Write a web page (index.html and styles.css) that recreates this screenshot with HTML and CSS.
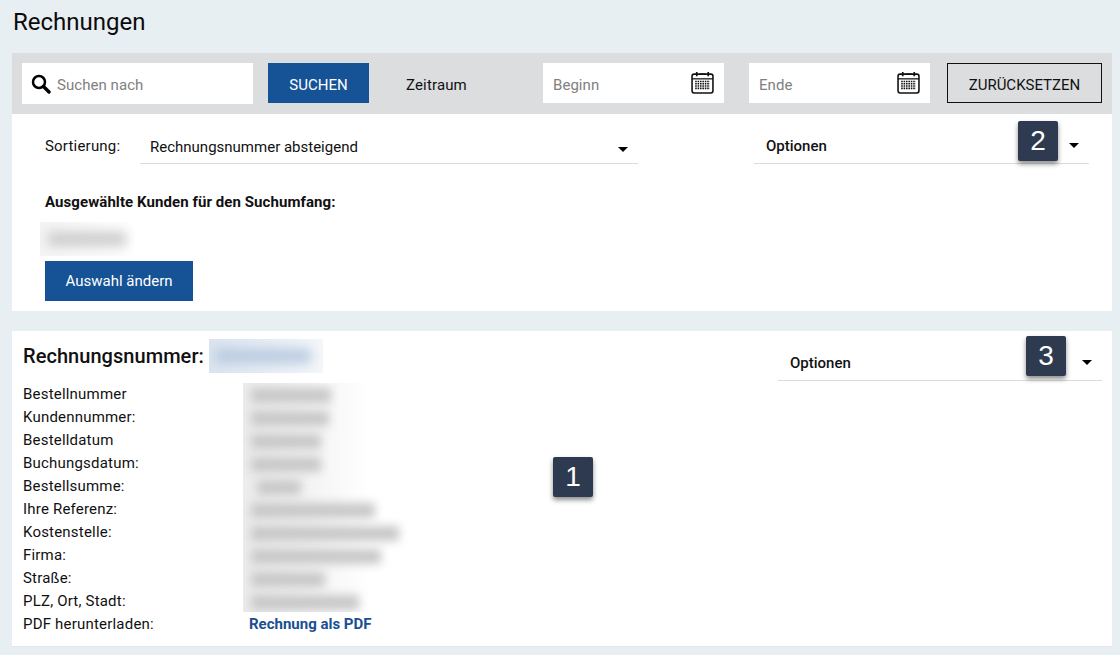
FILE: index.html
```html
<!DOCTYPE html>
<html lang="de">
<head>
<meta charset="utf-8">
<title>Rechnungen</title>
<link rel="stylesheet" href="styles.css">
</head>
<body>
<svg class="defs" width="0" height="0" aria-hidden="true">
  <symbol id="cal" viewBox="0 0 22 22">
    <rect x="1" y="3" width="20" height="18" rx="2" fill="#fff" stroke="#111" stroke-width="1.5"/>
    <path d="M1 7.5h20" stroke="#111" stroke-width="1.2"/>
    <path d="M5.5 1v4M16.5 1v4" stroke="#111" stroke-width="1.6"/>
    <path d="M8 3h6" stroke="#111" stroke-width="1.4"/>
    <path d="M4 10h14M4 12.200h14M4 14.400h14M4 16.600h14" stroke="#111" stroke-width="1.500" stroke-dasharray="1.500 .8"/>
  </symbol>
</svg>
<h1 class="title">Rechnungen</h1>
<section class="panel">
  <div class="toolbar">
    <div class="field search">
      <svg class="search-icon" width="20" height="20" viewBox="0 0 20 20"><circle cx="8" cy="8" r="6" fill="none" stroke="#000" stroke-width="2.500"/><path d="M12.500 12.500L18 18" stroke="#000" stroke-width="3.400" stroke-linecap="round"/></svg>
      <span class="ph">Suchen nach</span>
    </div>
    <button class="btn btn-search">SUCHEN</button>
    <span class="range">Zeitraum</span>
    <div class="field date"><span class="ph">Beginn</span><svg class="cal" width="23" height="23"><use href="#cal"/></svg></div>
    <div class="field date date-end"><span class="ph">Ende</span><svg class="cal" width="23" height="23"><use href="#cal"/></svg></div>
    <button class="btn btn-reset">ZURÜCKSETZEN</button>
  </div>
  <div class="filters">
    <div class="sort-row">
      <span class="sort-label">Sortierung:</span>
      <div class="select select-sort"><span>Rechnungsnummer absteigend</span><i class="caret"></i></div>
      <div class="select select-opt"><b>Optionen</b><i class="caret caret-up"></i><span class="badge badge-2">2</span></div>
    </div>
    <p class="scope-label">Ausgewählte Kunden für den Suchumfang:</p>
    <div class="blur-box blur-customer"><i class="bar w70"></i></div>
    <button class="btn btn-change">Auswahl ändern</button>
  </div>
</section>
<section class="card">
  <div class="card-main">
    <h2 class="card-title">Rechnungsnummer: <span class="blur-box blur-number"><i class="bar bar-blue"></i></span></h2>
    <div class="details">
      <ul class="labels">
        <li>Bestellnummer</li>
        <li>Kundennummer:</li>
        <li>Bestelldatum</li>
        <li>Buchungsdatum:</li>
        <li>Bestellsumme:</li>
        <li>Ihre Referenz:</li>
        <li>Kostenstelle:</li>
        <li>Firma:</li>
        <li>Straße:</li>
        <li>PLZ, Ort, Stadt:</li>
        <li>PDF herunterladen:</li>
      </ul>
      <div class="values">
        <div class="blur-box blur-values">
          <i class="line l1"></i>
          <i class="line l2"></i>
          <i class="line l3"></i>
          <i class="line l4"></i>
          <i class="line l5"></i>
          <i class="line l6"></i>
          <i class="line l7"></i>
          <i class="line l8"></i>
          <i class="line l9"></i>
          <i class="line l10"></i>
        </div>
        <a class="pdf-link" href="#">Rechnung als PDF</a>
      </div>
    </div>
  </div>
  <div class="select select-opt2"><b>Optionen</b><i class="caret caret-up"></i><span class="badge badge-3">3</span></div>
  <span class="badge badge-1">1</span>
</section>
</body>
</html>
```
FILE: styles.css
```css
* { box-sizing: border-box; }
html, body { height: 100%; }
body {
  margin: 0;
  padding: 0 8px 0 12px;
  background: #e8eff3;
  font-family: Roboto, "Liberation Sans", sans-serif;
  font-size: 15px;
  color: #111;
  overflow: hidden;
}
.defs { position: absolute; }
.title {
  margin: 0;
  height: 53px;
  padding: 9px 0 0 1px;
  font-size: 24px;
  line-height: 27px;
  font-weight: 400;
  color: #0b0b0b;
}
.panel { background: #fff; height: 258px; }
.toolbar {
  display: flex;
  align-items: flex-start;
  height: 61px;
  padding: 10px 10px 0;
  background: #dcdddf;
}
.field {
  display: flex;
  align-items: center;
  background: #fff;
  height: 40px;
}
.ph { color: #808080; padding-top: 3px; letter-spacing: .05px; }
.search { width: 231px; height: 41px; padding-left: 9px; }
.search-icon { margin-right: 6px; margin-top: 1px; }
.btn {
  border: 0;
  padding: 0;
  font: inherit;
  height: 40px;
}
.btn-search {
  width: 101px;
  margin-left: 15px;
  background: #165396;
  color: #fff;
  padding-top: 3px;
}
.range { width: 137px; margin-left: 37px; line-height: 44px; letter-spacing: .15px; }
.date { width: 181px; padding: 0 10px; justify-content: space-between; }
.date-end { margin-left: 25px; }
.cal { margin-top: -2px; }
.btn-reset {
  width: 155px;
  margin-left: 17px;
  background: transparent;
  border: 1px solid #111;
  color: #111;
  padding-top: 3px;
}
.filters { padding: 0 23px 0 33px; position: relative; }
.sort-row { display: flex; height: 50px; }
.sort-label { flex: none; width: 95px; padding-top: 24px; line-height: 17px; letter-spacing: .2px; }
.select {
  flex: none;
  position: relative;
  display: flex;
  align-items: center;
  justify-content: space-between;
  border-bottom: 1px solid #dcdcdc;
}
.select-sort { width: 498px; height: 50px; padding: 16px 10px 0 10px; }
.select-opt { width: 335px; height: 50px; margin-left: 116px; padding: 14px 10px 0 12px; }
.select-opt2 { position: absolute; right: 10px; top: 0; width: 324px; height: 50px; padding: 14px 10px 0 12px; }
.select b { font-weight: 500; }
.caret {
  width: 0;
  height: 0;
  border: 5px solid transparent;
  border-top: 5px solid #000;
  border-bottom: 0;
  margin-top: 5px;
}
.caret-up { margin-top: 0; }
.scope-label {
  margin: 0;
  padding-top: 30px;
  height: 58px;
  font-weight: 700;
  line-height: 17px;
  letter-spacing: .08px;
}
.blur-box { display: block; overflow: hidden; }
.bar, .line { display: block; }
.blur-customer { width: 95px; height: 34px; margin-left: -5px; padding: 10px 8px; background: linear-gradient(90deg, #f4f4f4, #fff); }
.bar { height: 14px; background: #cbcbcb; filter: blur(6px); }
.w70 { width: 78px; }
.btn-change {
  display: block;
  width: 148px;
  margin-top: 5px;
  background: #165396;
  color: #fff;
}
.card {
  position: relative;
  margin-top: 20px;
  height: 315px;
  background: #fff;
  padding: 8px 10px;
  box-shadow: 0 1px 1px #e0e6ea;
}
.card-title {
  display: flex;
  align-items: center;
  margin: 0;
  height: 34px;
  padding-left: 1px;
  font-size: 20px;
  font-weight: 500;
  letter-spacing: .05px;
}
.blur-number {
  width: 114px;
  height: 34px;
  margin-left: 5px;
  padding: 10px 6px;
  background: linear-gradient(90deg, #dbe4ef, #f4f7fa);
}
.bar-blue { width: 96px; background: #b8cae0; }
.details { display: flex; margin-top: 10px; }
.labels {
  list-style: none;
  margin: 0;
  padding: 0 0 0 1px;
  width: 221px;
  line-height: 23px;
  letter-spacing: .2px;
}
.values { width: 400px; }
.blur-values {
  width: 170px;
  height: 229px;
  padding-top: 5px;
  background: linear-gradient(90deg, #ececec, #f4f4f4 40%, #fff 75%);
}
.line {
  height: 15px;
  margin: 0 0 8px 8px;
  background: #c8c8c8;
  filter: blur(5px);
}
.l1 { width: 80px; }
.l2 { width: 78px; }
.l3 { width: 70px; }
.l4 { width: 70px; }
.l5 { width: 44px; margin-left: 14px; }
.l6 { width: 124px; }
.l7 { width: 148px; }
.l8 { width: 130px; }
.l9 { width: 74px; }
.l10 { width: 108px; }
.pdf-link {
  display: block;
  margin: 1px 0 0 6px;
  line-height: 23px;
  color: #1a4f92;
  font-weight: 700;
  text-decoration: none;
}
.badge {
  position: absolute;
  width: 40px;
  height: 40px;
  background: #2d3a4f;
  color: #fff;
  border-radius: 2px;
  box-shadow: 0 3px 5px rgba(0, 0, 0, .45);
  font-family: "Liberation Sans", Arial, sans-serif;
  font-size: 28px;
  line-height: 40px;
  text-align: center;
}
.badge-2 { right: 31px; top: 7px; }
.badge-3 { right: 36px; top: 5px; }
.badge-1 { left: 541px; top: 126px; }
```
